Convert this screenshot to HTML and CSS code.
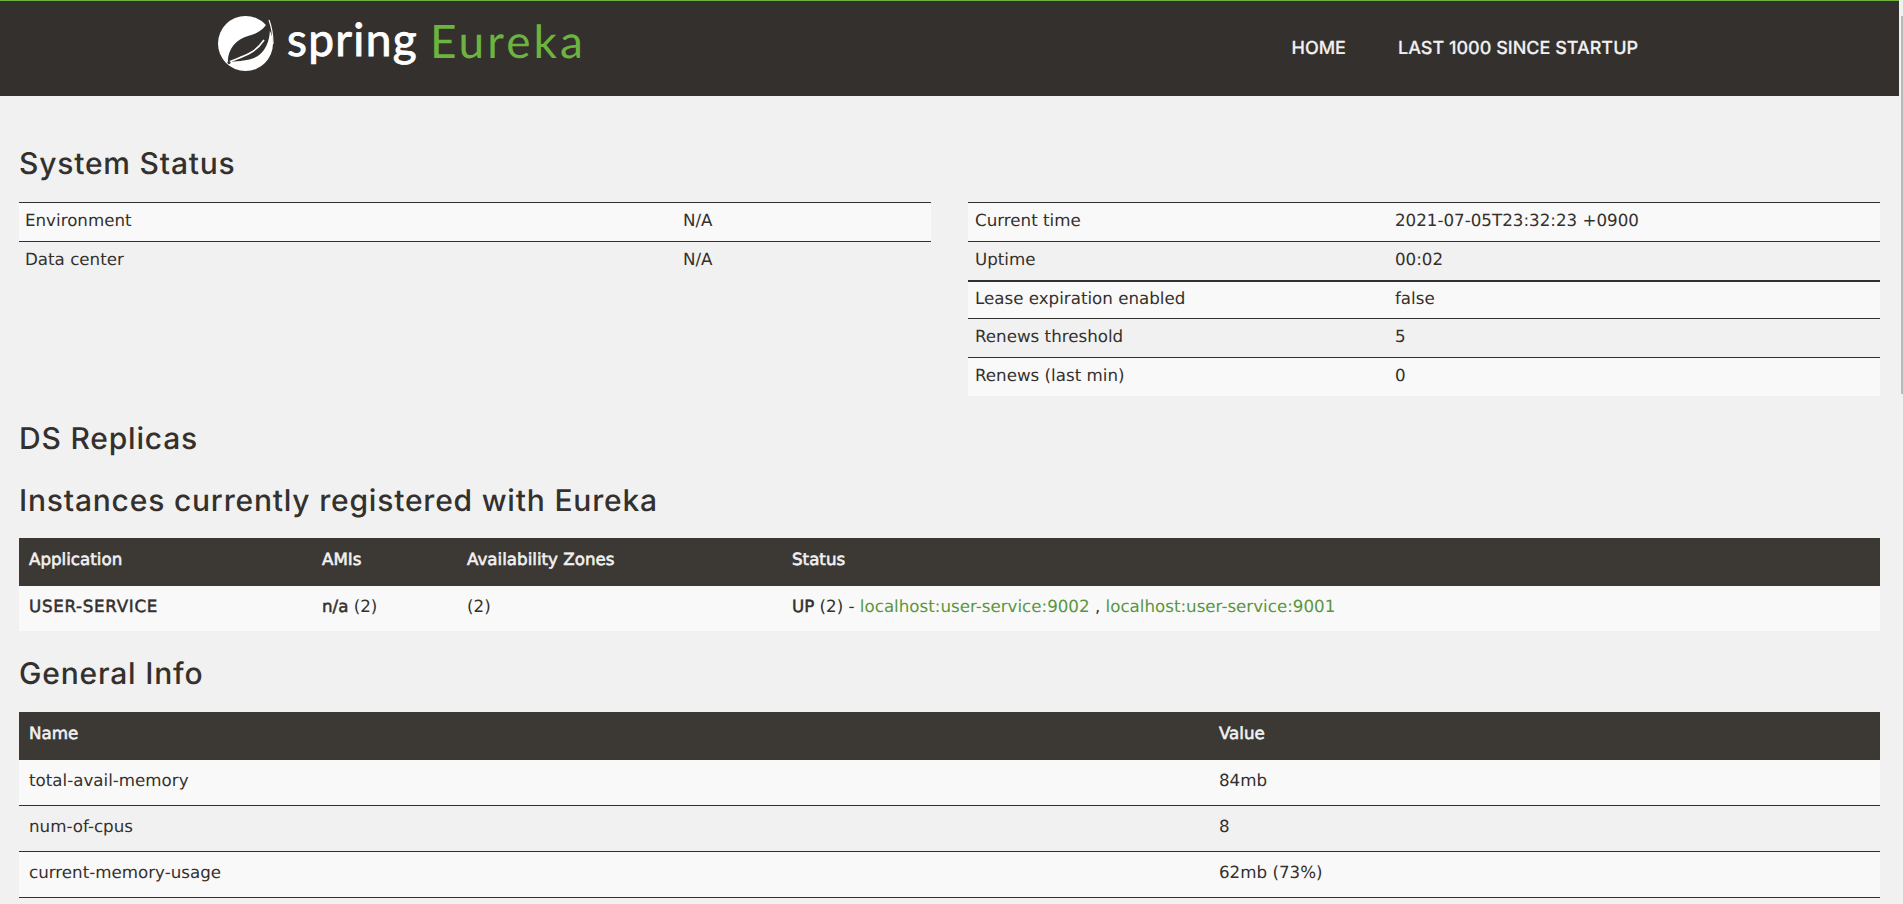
FILE: index.html
```html
<!DOCTYPE html>
<html lang="en">
<head>
<meta charset="utf-8">
<title>Eureka</title>
<link rel="stylesheet" href="styles.css">
</head>
<body>
<nav class="navbar">
  <a class="brand" href="#">
    <svg class="leaf" viewBox="0 0 80 70" width="80" height="70" aria-hidden="true">
      <circle cx="35.5" cy="35.5" r="27.5" fill="#fff"/>
      <path d="M18 55C17 42 26 31 38 28C47 26 55 21 59 12C62 26 58 44 44 50C34 54 26 52 18 55Z" fill="#34302d"/>
      <path d="M59 12C62 20 63 28 63 36" fill="none" stroke="#fff" stroke-width="1.2"/>
      <path d="M19 54C30 49 44 47 54 32" fill="none" stroke="#fff" stroke-width="1.6"/>
      <circle cx="19" cy="54.5" r="1.5" fill="#34302d"/>
    </svg>
    <span class="brand-spring">spring</span>
    <span class="brand-eureka">Eureka</span>
  </a>
  <ul class="nav-links">
    <li><a href="#">HOME</a></li>
    <li><a href="#">LAST 1000 SINCE STARTUP</a></li>
  </ul>
</nav>
<div class="scroll-thumb"></div>
<main class="content">
  <h1 class="first">System Status</h1>
  <div class="status-grid">
    <table class="kv env">
      <tbody>
        <tr class="odd"><td class="c-env">Environment</td><td>N/A</td></tr>
        <tr><td>Data center</td><td>N/A</td></tr>
      </tbody>
    </table>
    <table class="kv time">
      <tbody>
        <tr class="odd"><td class="c-time">Current time</td><td>2021-07-05T23:32:23 +0900</td></tr>
        <tr><td>Uptime</td><td>00:02</td></tr>
        <tr class="odd thick"><td>Lease expiration enabled</td><td>false</td></tr>
        <tr><td>Renews threshold</td><td>5</td></tr>
        <tr class="odd"><td>Renews (last min)</td><td>0</td></tr>
      </tbody>
    </table>
  </div>
  <h1 class="replicas">DS Replicas</h1>
  <h1 class="instances">Instances currently registered with Eureka</h1>
  <table class="data apps">
    <thead>
      <tr><th class="c-app">Application</th><th class="c-ami">AMIs</th><th class="c-az">Availability Zones</th><th>Status</th></tr>
    </thead>
    <tbody>
      <tr class="odd"><td><b class="wide">USER-SERVICE</b></td><td><b>n/a</b> (2)</td><td>(2)</td><td><b>UP</b> (2) - <a href="#">localhost:user-service:9002</a> , <a href="#">localhost:user-service:9001</a></td></tr>
    </tbody>
  </table>
  <h1 class="general">General Info</h1>
  <table class="data info">
    <thead>
      <tr><th class="c-name">Name</th><th>Value</th></tr>
    </thead>
    <tbody>
      <tr class="odd"><td>total-avail-memory</td><td>84mb</td></tr>
      <tr><td>num-of-cpus</td><td>8</td></tr>
      <tr class="odd thick"><td>current-memory-usage</td><td>62mb (73%)</td></tr>
    </tbody>
  </table>
</main>
</body>
</html>
```
FILE: styles.css
```css
* { box-sizing: border-box; }
html { height: 100%; overflow: hidden; }
body {
  margin: 0;
  height: 100%;
  overflow: hidden;
  position: relative;
  background: #f1f1f1;
  color: #34302d;
  font-family: "DejaVu Sans", "Open Sans", sans-serif;
  font-size: 16.7px;
  line-height: 22px;
  text-rendering: geometricPrecision;
}
.scroll-thumb {
  position: absolute;
  top: 16px;
  right: 0;
  width: 2px;
  height: 378px;
  background: #b9b9b9;
}

.navbar {
  height: 96px;
  margin-right: 4px;
  background: #34302d;
  border-top: 1px solid #6db33f;
  display: flex;
  justify-content: space-between;
}
.brand {
  display: flex;
  align-items: flex-start;
  margin-left: 210px;
  padding-top: 7px;
  text-decoration: none;
}
.leaf { margin-right: -3px; }
.brand-spring {
  color: #fff;
  font-family: "Lato", sans-serif;
  font-size: 46px;
  line-height: 62px;
  letter-spacing: 1.3px;
  -webkit-text-stroke: 0.9px #fff;
}
.brand-eureka {
  margin-left: 12px;
  color: #6db33f;
  font-family: "Lato", sans-serif;
  font-size: 46px;
  line-height: 66px;
  letter-spacing: 3.1px;
}
.nav-links {
  list-style: none;
  display: flex;
  gap: 52px;
  margin: 0 261px 0 0;
  padding: 36px 0 0;
}
.nav-links a {
  color: #f1f1f1;
  font-family: "Inter", sans-serif;
  font-size: 18px;
  font-weight: 500;
  line-height: 24px;
  text-decoration: none;
  -webkit-text-stroke: 0.2px #f1f1f1;
}

.content { padding: 0 23px 0 19px; }
h1 {
  margin: 0;
  font-family: "Inter", sans-serif;
  font-size: 30px;
  font-weight: 500;
  letter-spacing: 0.8px;
  line-height: 34px;
}
h1.first { padding-top: 51px; margin-bottom: 21px; }
h1.replicas { margin-top: 26px; }
h1.instances { margin-top: 28px; margin-bottom: 20px; }
h1.general { margin-top: 26px; margin-bottom: 21px; }

.status-grid {
  display: grid;
  grid-template-columns: 912px 912px;
  gap: 37px;
  align-items: start;
}
table {
  width: 100%;
  border-spacing: 0;
  border-collapse: separate;
  table-layout: fixed;
}
td, th { text-align: left; font-weight: 400; }
.kv td {
  height: 38.8px;
  padding: 5px 6px 9px;
  border-top: 1px solid #34302d;
}
.time td { padding-left: 7px; padding-right: 7px; }
.odd td { background: #f9f9f9; }
.thick td { border-top-width: 2px; }
.c-env { width: 658px; }
.c-time { width: 420px; }

.data th {
  height: 48px;
  padding: 0 9px 5px;
  background: #3c3834;
  color: #f1f1f1;
  -webkit-text-stroke: 0.6px #f1f1f1;
}
.data td {
  height: 46px;
  padding: 0 9px 4px;
  border-top: 1px solid #34302d;
}
.data th:first-child, .data td:first-child { padding-left: 10px; }
.data tbody tr:first-child td { border-top: 0; height: 45px; }
.info tbody tr:last-child td { border-bottom: 1px solid #34302d; height: 47px; }
.c-app { width: 294px; }
.c-ami { width: 145px; }
.c-az { width: 325px; }
.c-name { width: 1191px; }
b { font-weight: 400; -webkit-text-stroke: 0.5px #34302d; }
b.wide { letter-spacing: 0.7px; }
td a { color: #5a9640; text-decoration: none; }
```
